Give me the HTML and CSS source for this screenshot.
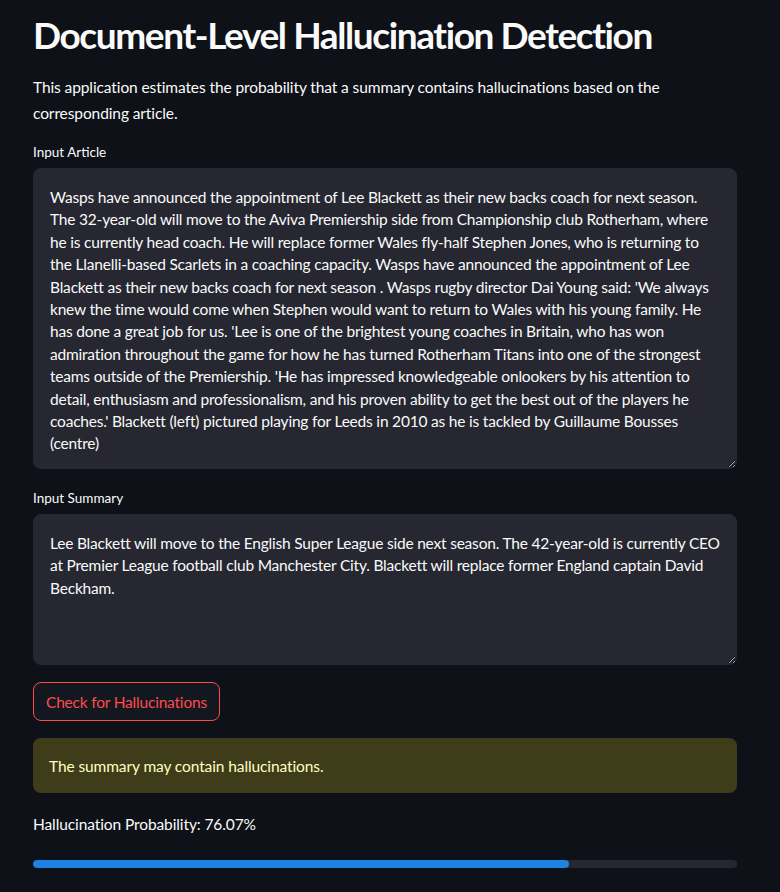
FILE: index.html
```html
<!DOCTYPE html>
<html>
<head>
<meta charset="utf-8">
<link rel="stylesheet" href="styles.css">
</head>
<body>
<main class="app">
  <h1 class="title">Document-Level Hallucination Detection</h1>
  <p class="intro">This application estimates the probability that a summary contains hallucinations based on the corresponding article.</p>

  <div class="field">
    <label class="label">Input Article</label>
    <textarea class="area area-article">Wasps have announced the appointment of Lee Blackett as their new backs coach for next season. The 32-year-old will move to the Aviva Premiership side from Championship club Rotherham, where he is currently head coach. He will replace former Wales fly-half Stephen Jones, who is returning to the Llanelli-based Scarlets in a coaching capacity. Wasps have announced the appointment of Lee Blackett as their new backs coach for next season . Wasps rugby director Dai Young said: 'We always knew the time would come when Stephen would want to return to Wales with his young family. He has done a great job for us. 'Lee is one of the brightest young coaches in Britain, who has won admiration throughout the game for how he has turned Rotherham Titans into one of the strongest teams outside of the Premiership. 'He has impressed knowledgeable onlookers by his attention to detail, enthusiasm and professionalism, and his proven ability to get the best out of the players he coaches.' Blackett (left) pictured playing for Leeds in 2010 as he is tackled by Guillaume Bousses (centre)</textarea>
  </div>

  <div class="field field-2">
    <label class="label">Input Summary</label>
    <textarea class="area area-summary">Lee Blackett will move to the English Super League side next season. The 42-year-old is currently CEO at Premier League football club Manchester City. Blackett will replace former England captain David Beckham.</textarea>
  </div>

  <div class="actions">
    <button class="btn">Check for Hallucinations</button>
  </div>

  <div class="alert">The summary may contain hallucinations.</div>

  <p class="prob">Hallucination Probability: 76.07%</p>

  <div class="progress"><div class="progress-fill" style="width:76.07%"></div></div>
</main>
</body>
</html>
```

FILE: styles.css
```css
html, body {
  margin: 0;
  padding: 0;
  background: #0e1117;
}
body {
  font-family: Lato, "Noto Sans", sans-serif;
  color: #fafafa;
  font-size: 16px;
}
.app {
  width: 704px;
  margin: 0 0 0 33px;
  padding-top: 9px;
  display: flex;
  flex-direction: column;
}
.title {
  margin: 0;
  font-size: 37px;
  font-weight: 700;
  line-height: 52px;
  letter-spacing: -1.4px;
}
.intro {
  margin: 13px 0 0 0;
  line-height: 26px;
  font-size: 15.5px;
  letter-spacing: -0.1px;
}
.field {
  display: flex;
  flex-direction: column;
  margin-top: 16px;
}
.field-2 {
  margin-top: 19px;
}
.label {
  font-size: 13.5px;
  line-height: 20px;
  margin-bottom: 6px;
}
.area {
  box-sizing: border-box;
  width: 100%;
  background: #262730;
  color: #fafafa;
  border: 1px solid #262730;
  border-radius: 8px;
  padding: 17px 16px 16px 16px;
  font-family: inherit;
  font-size: 15.5px;
  line-height: 22.4px;
  letter-spacing: -0.2px;
  outline: none;
  resize: vertical;
  overflow: hidden;
}
.area-article { height: 301px; }
.area-summary { height: 151px; }
.actions {
  margin-top: 17px;
}
.btn {
  box-sizing: border-box;
  height: 39px;
  padding: 0 12px;
  background: #131720;
  color: #ff4b4b;
  border: 1px solid #ff4b4b;
  border-radius: 8px;
  font-family: inherit;
  font-size: 15.5px;
  letter-spacing: -0.2px;
  display: block;
}
.alert {
  margin-top: 17px;
  box-sizing: border-box;
  height: 55px;
  display: flex;
  align-items: center;
  padding: 0 16px;
  background: #3f3c19;
  color: #ffffc2;
  border-radius: 8px;
  font-size: 15.5px;
  letter-spacing: -0.1px;
}
.prob {
  margin: 18px 0 0 0;
  line-height: 26px;
  font-size: 15.5px;
  letter-spacing: -0.1px;
}
.progress {
  margin-top: 23px;
  height: 8px;
  background: #262730;
  border-radius: 8px;
  overflow: hidden;
}
.progress-fill {
  height: 100%;
  background: #1c83e1;
  border-radius: 8px;
}
```
